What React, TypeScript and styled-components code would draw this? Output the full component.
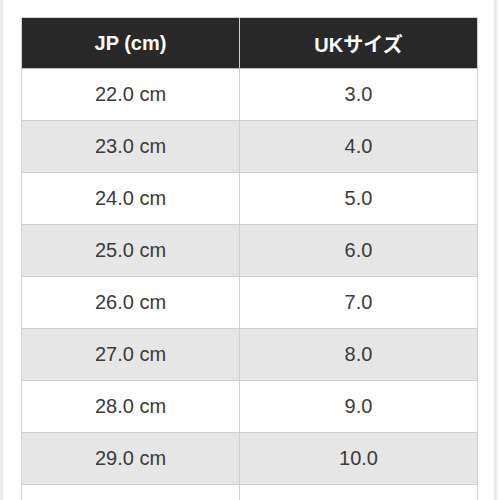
import React from "react";
import styled, { createGlobalStyle } from "styled-components";

const sizes = [
  { jp: "22.0 cm", uk: "3.0" },
  { jp: "23.0 cm", uk: "4.0" },
  { jp: "24.0 cm", uk: "5.0" },
  { jp: "25.0 cm", uk: "6.0" },
  { jp: "26.0 cm", uk: "7.0" },
  { jp: "27.0 cm", uk: "8.0" },
  { jp: "28.0 cm", uk: "9.0" },
  { jp: "29.0 cm", uk: "10.0" },
  // next row only starts at the bottom edge of the shot
  { jp: "", uk: "" },
];

function App() {
  return (
    <>
      <GlobalStyle />
      <Page>
        <SizeTable>
          <colgroup>
            <col style={{ width: 218 }} />
            <col style={{ width: 238 }} />
          </colgroup>
          <thead>
            <tr>
              <HeadCell>JP (cm)</HeadCell>
              <HeadCell>UKサイズ</HeadCell>
            </tr>
          </thead>
          <tbody>
            {sizes.map((s, i) => (
              <Row key={i} $striped={i % 2 === 1}>
                <Cell>{s.jp}</Cell>
                <Cell>{s.uk}</Cell>
              </Row>
            ))}
          </tbody>
        </SizeTable>
      </Page>
    </>
  );
}

const GlobalStyle = createGlobalStyle`
  html, body {
    margin: 0;
    padding: 0;
    background: #fff;
    overflow: hidden;
  }
  body {
    font-family: "Liberation Sans", "Noto Sans CJK JP", Arial, sans-serif;
  }
`;

const Page = styled.div`
  box-sizing: border-box;
  width: 497px;
  height: 500px;
  border-left: 3px solid #ebebeb;
  border-right: 3px solid #ebebeb;
  padding: 17px 17px 0 18px;
  overflow: hidden;
`;

const SizeTable = styled.table`
  width: 456px;
  table-layout: fixed;
  border-collapse: collapse;
  border: 1px solid #cfcfcf;
`;

const HeadCell = styled.th`
  height: 50px;
  padding: 0;
  background: #292929;
  color: #fff;
  font-size: 20px;
  font-weight: 700;
  text-align: center;
  border: 1px solid #cfcfcf;
  border-bottom-color: #bdbdbd;
`;

const Row = styled.tr<{ $striped: boolean }>`
  background: ${(p) => (p.$striped ? "#e6e6e6" : "#fff")};
`;

const Cell = styled.td`
  height: 51px;
  padding: 0;
  color: #3a3a3a;
  font-size: 20px;
  text-align: center;
  border: 1px solid #cfcfcf;
`;

export default App;
